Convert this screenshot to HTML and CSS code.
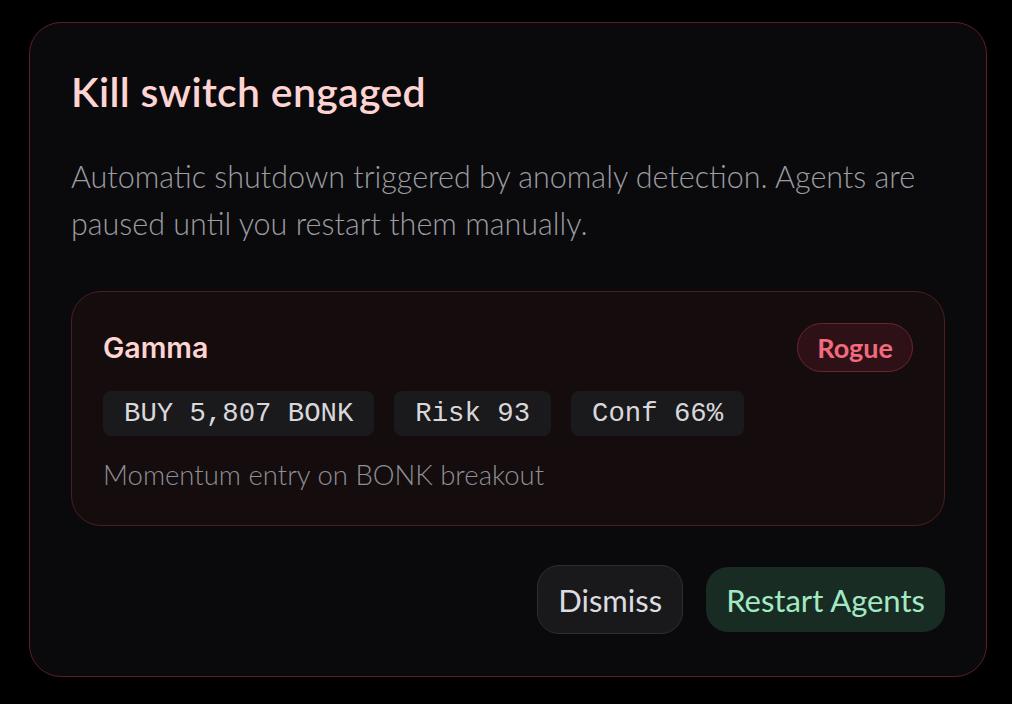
FILE: index.html
```html
<!DOCTYPE html>
<html>
<head>
<meta charset="utf-8">
<link rel="stylesheet" href="styles.css">
</head>
<body>
<div class="modal">
  <h1 class="title">Kill switch engaged</h1>
  <p class="desc">Automatic shutdown triggered by anomaly detection. Agents are paused until you restart them manually.</p>
  <div class="agent">
    <div class="agent-head">
      <span class="agent-name">Gamma</span>
      <span class="badge">Rogue</span>
    </div>
    <div class="chips">
      <span class="chip">BUY 5,807 BONK</span>
      <span class="chip">Risk 93</span>
      <span class="chip">Conf 66%</span>
    </div>
    <div class="reason">Momentum entry on BONK breakout</div>
  </div>
  <div class="actions">
    <button class="btn btn-dismiss">Dismiss</button>
    <button class="btn btn-restart">Restart Agents</button>
  </div>
</div>
</body>
</html>
```
FILE: styles.css
```css
* { box-sizing: border-box; }
html, body { margin: 0; padding: 0; }
body {
  width: 1012px;
  height: 704px;
  background: #000;
  font-family: "Lato", "Open Sans", sans-serif;
  overflow: hidden;
  padding: 22px 25px 0 29px;
}
.modal {
  width: 958px;
  height: 655px;
  background: #0a0a0c;
  border: 1.5px solid #5a2024;
  border-radius: 32px;
  padding: 37px 41px 0 41px;
  display: flex;
  flex-direction: column;
}
.title {
  margin: 0;
  font-size: 41px;
  line-height: 64px;
  font-weight: 600;
  color: #fdd4d2;
  letter-spacing: 0.3px;
}
.desc {
  margin: 29px 0 0 0;
  font-size: 30.5px;
  line-height: 47px;
  font-weight: 300;
  color: #9c9ca3;
}
.agent {
  margin-top: 44px;
  background: #140c0d;
  border: 1.5px solid #4e1d21;
  border-radius: 30px;
  padding: 30px 31px 33px 31px;
  display: flex;
  flex-direction: column;
}
.agent-head {
  display: flex;
  justify-content: space-between;
  align-items: center;
  height: 50px;
}
.agent-name {
  font-family: "Inter", sans-serif;
  font-size: 28.5px;
  font-weight: 600;
  color: #fdd4d2;
}
.badge {
  height: 49px;
  padding: 0 19px;
  display: flex;
  align-items: center;
  border-radius: 25px;
  background: #2d1117;
  border: 1.5px solid #6b2530;
  color: #f26a7e;
  font-size: 27px;
  font-weight: 700;
}
.chips {
  display: flex;
  gap: 20px;
  margin-top: 19px;
}
.chip {
  height: 45px;
  padding: 0 21px;
  display: flex;
  align-items: center;
  background: #1a1a1d;
  border-radius: 8px;
  font-family: "Liberation Mono", monospace;
  font-size: 27.3px;
  color: #d8d8dc;
}
.reason {
  margin-top: 22px;
  font-size: 27.5px;
  line-height: 34px;
  font-weight: 300;
  color: #8f8f96;
}
.actions {
  margin-top: 39px;
  display: flex;
  justify-content: flex-end;
  align-items: center;
  gap: 23px;
}
.btn {
  font-family: "Lato", sans-serif;
  font-size: 31px;
  font-weight: 400;
  border-radius: 22px;
  cursor: pointer;
}
.btn-dismiss {
  height: 69px;
  padding: 0 20px;
  background: #19191b;
  border: 1.5px solid #2e2e31;
  color: #dcdce0;
}
.btn-restart {
  height: 65px;
  padding: 0 20px;
  background: #182c23;
  border: none;
  color: #a3e9c3;
}
```
